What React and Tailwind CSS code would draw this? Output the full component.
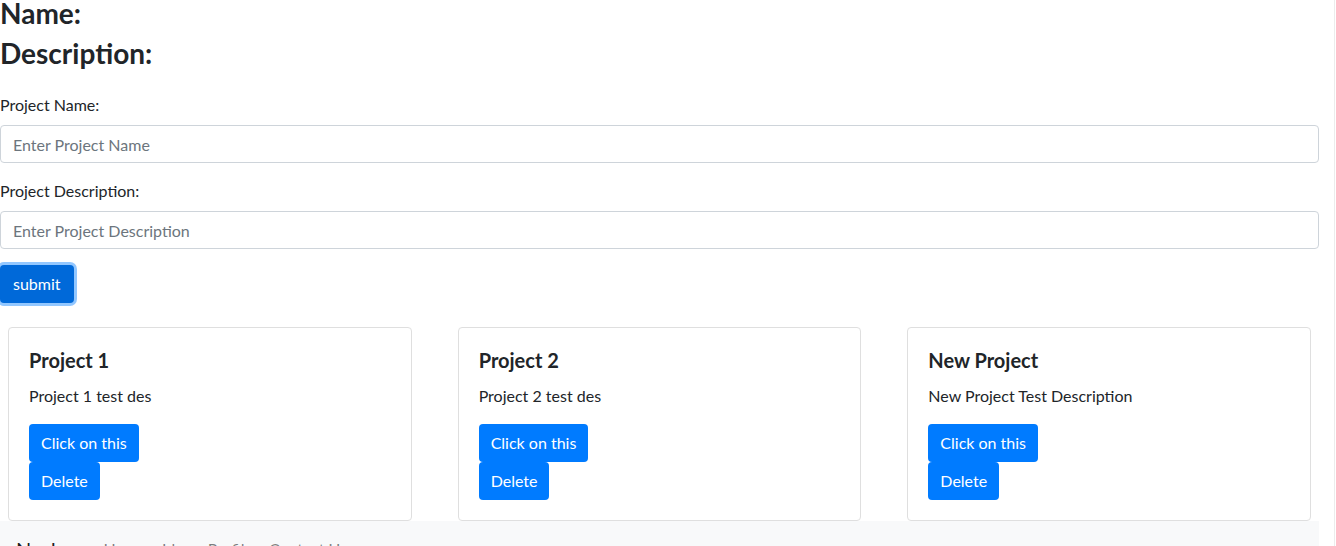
const projects = [
  { name: 'Project 1', description: 'Project 1 test des' },
  { name: 'Project 2', description: 'Project 2 test des' },
  { name: 'New Project', description: 'New Project Test Description' },
];

const ProjectCard = ({ project }) => (
  <div className="mx-2 mt-2 rounded border border-[#dfdfdf] bg-white p-5">
    <h5 className="mb-3 text-xl leading-6 font-bold text-[#212529]">{project.name}</h5>
    <p className="mb-4 text-base leading-6 text-[#212529]">{project.description}</p>
    <div className="flex flex-col items-start">
      <button className="h-[38px] rounded bg-[#007bff] px-3 text-base text-white">Click on this</button>
      <button className="h-[38px] rounded bg-[#007bff] px-3 text-base text-white">Delete</button>
    </div>
  </div>
);

export default function App() {
  return (
    <div className="flex min-h-screen bg-white font-['Lato','Noto_Sans',sans-serif] text-[#212529]">
      <div className="w-[1319px] shrink-0">
        <h3 className="mb-[13px] text-[28px] leading-[27px] font-bold">Name:</h3>
        <h3 className="mb-[13px] text-[28px] leading-[27px] font-bold">Description:</h3>

        <form className="pt-[13px]" onSubmit={(e) => e.preventDefault()}>
          <div className="mb-4">
            <label className="mb-2 block text-base leading-6">Project Name:</label>
            <input
              placeholder="Enter Project Name"
              className="block h-[38px] w-full rounded border border-[#ced4da] px-3 text-base text-[#495057] outline-none placeholder:text-[#6c757d]"
            />
          </div>
          <div className="mb-4">
            <label className="mb-2 block text-base leading-6">Project Description:</label>
            <input
              placeholder="Enter Project Description"
              className="block h-[38px] w-full rounded border border-[#ced4da] px-3 text-base text-[#495057] outline-none placeholder:text-[#6c757d]"
            />
          </div>
          <button
            type="submit"
            className="h-[38px] rounded bg-[#0069d9] px-[13px] text-base text-white shadow-[0_0_0_3px_rgba(38,143,255,0.5)]"
          >
            submit
          </button>
        </form>

        <div className="-mx-[15px] mt-4 grid grid-cols-3">
          {projects.map((p) => (
            <div key={p.name} className="px-[15px]">
              <ProjectCard project={p} />
            </div>
          ))}
        </div>

        <nav className="flex items-center bg-[#f8f9fa] px-4 py-2">
          <a className="mr-4 py-[5px] text-xl leading-[30px] text-black/90">Navbar</a>
          <ul className="flex">
            {['Home', 'Idea', 'Profile', 'Contact Us'].map((l) => (
              <li key={l}>
                <a className="block px-2 py-2 text-base leading-6 text-black/50">{l}</a>
              </li>
            ))}
          </ul>
        </nav>
      </div>
      <div className="flex-1" />
      <div className="w-px bg-[#ececec]" />
      <div className="w-px" />
    </div>
  );
}
